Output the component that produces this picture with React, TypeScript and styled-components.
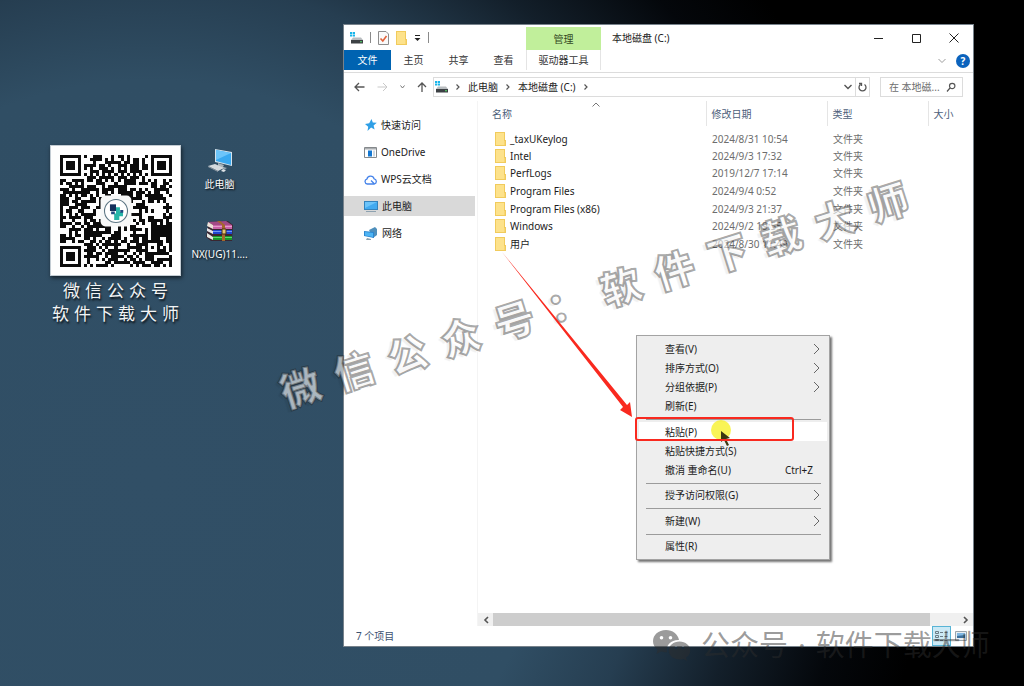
import React from "react";
import styled, { createGlobalStyle } from "styled-components";

const GlobalStyle = createGlobalStyle`
  * { box-sizing: border-box; }
  body {
    margin: 0;
    font-family: "Noto Sans", "Noto Sans CJK SC", sans-serif;
    font-size: 10px;
    line-height: 16px;
    color: #1c1c1c;
  }
  button, input {
    font: inherit;
    color: inherit;
    border: 0;
    padding: 0;
    margin: 0;
    background: none;
  }
  a { color: inherit; text-decoration: none; }
  svg { display: block; flex: none; }
`;

/* ---------- desktop ---------- */

const Desktop = styled.main`
  position: relative;
  min-height: 100vh;
  overflow: hidden;
  background: radial-gradient(
      circle at 150px 480px,
      #314f66 0px,
      #304e64 400px,
      #263e51 500px,
      #131f2a 600px,
      #04070b 700px,
      #000 780px
    );
`;

const DesktopItems = styled.div`
  display: flex;
  align-items: flex-start;
  gap: 8px;
  padding: 145px 0 0 50px;
`;

const QrCard = styled.figure`
  width: 131px;
  margin: 0;
`;

const QrPaper = styled.div`
  display: grid;
  place-items: center;
  height: 131px;
  background: #fefefe;
  border: 1px solid #c3ccd3;
  box-shadow: 1px 2px 4px rgba(0, 0, 0, 0.6);
`;

const QrCaption = styled.figcaption`
  padding: 3px 0 0 5px;
  margin: 0 -4px;
  font-size: 17px;
  line-height: 23px;
  letter-spacing: 5px;
  text-align: center;
  white-space: nowrap;
  color: #f2f4f5;
  text-shadow: 1px 2px 2px rgba(0, 0, 0, 0.8);
`;

const IconColumn = styled.nav`
  display: flex;
  flex-direction: column;
  gap: 24px;
  width: 61px;
  padding-top: 3px;
`;

const DesktopIcon = styled.a`
  display: flex;
  flex-direction: column;
  align-items: center;
  gap: 3px;
  height: 46px;
  color: #fff;
  white-space: nowrap;
  text-shadow: 1px 1px 2px #000;
`;

/* ---------- explorer window ---------- */

const Window = styled.section`
  position: absolute;
  top: 24px;
  right: 50px;
  bottom: 39px;
  left: 343px;
  display: flex;
  flex-direction: column;
  background: #fff;
  border: 1px solid #77828b;
`;

const TitleBar = styled.header`
  display: flex;
  height: 25px;
`;

const QuickTools = styled.div`
  display: flex;
  align-items: center;
  gap: 7px;
  width: 182px;
  padding-left: 6px;
`;

const ToolRule = styled.span`
  width: 1px;
  height: 11px;
  background: #8a8a8a;
`;

const ContextTitle = styled.div`
  width: 75px;
  margin-top: 2px;
  line-height: 24px;
  text-align: center;
  color: #33481f;
  background: #c1ef9b;
`;

const WindowTitle = styled.h1`
  flex: 1;
  margin: 0;
  padding-left: 11px;
  font-size: 10px;
  font-weight: 400;
  line-height: 26px;
`;

const WindowButton = styled.button`
  display: grid;
  place-items: center;
  width: 38px;
`;

const Ribbon = styled.div`
  display: flex;
  height: 23px;
  border-bottom: 1px solid #dcdcdc;
`;

const RibbonTab = styled.button<{ $kind?: "file" | "tools" }>`
  width: ${(p) => (p.$kind === "file" ? 47 : p.$kind === "tools" ? 75 : 45)}px;
  height: 20px;
  line-height: 20px;
  color: ${(p) => (p.$kind === "file" ? "#fff" : "#333")};
  background: ${(p) => (p.$kind === "file" ? "#0063b1" : "none")};
  border: solid #e4e4e4;
  border-width: ${(p) => (p.$kind === "tools" ? "0 1px" : "0")};
`;

const RibbonTail = styled.div`
  flex: 1;
  display: flex;
  justify-content: flex-end;
  align-items: center;
  gap: 10px;
  padding-right: 3px;
`;

const HelpButton = styled.button`
  width: 14px;
  height: 14px;
  border-radius: 50%;
  line-height: 14px;
  font-weight: 700;
  color: #fff;
  background: #0b63bd;
`;

const NavRow = styled.div`
  display: flex;
  align-items: center;
  height: 28px;
  padding-right: 10px;
`;

const NavButtons = styled.div`
  display: flex;
  align-items: center;
  justify-content: space-between;
  width: 89px;
  padding: 0 6px 0 10px;
`;

const AddressBar = styled.div`
  flex: 1;
  display: flex;
  align-items: center;
  height: 20px;
  border: 1px solid #dcdcdc;
`;

const Crumbs = styled.div`
  flex: 1;
  display: flex;
  align-items: center;
  gap: 8px;
  padding-left: 1px;
  white-space: nowrap;
`;

const AddressButton = styled.button<{ $divided?: boolean }>`
  display: grid;
  place-items: center;
  width: 14px;
  height: 18px;
  border-left: ${(p) => (p.$divided ? "1px solid #dcdcdc" : "0")};
`;

const SearchBox = styled.label`
  display: flex;
  align-items: center;
  width: 83px;
  height: 20px;
  margin-left: 10px;
  padding: 0 6px 0 8px;
  border: 1px solid #dcdcdc;
`;

const SearchInput = styled.input`
  flex: 1;
  min-width: 0;
  height: 18px;
  outline: 0;
  &::placeholder { color: #6d6d6d; opacity: 1; }
`;

const Body = styled.div`
  flex: 1;
  display: flex;
  min-height: 0;
`;

const Sidebar = styled.nav`
  display: flex;
  flex-direction: column;
  gap: 7px;
  width: 134px;
  padding: 14px 2px 0 0;
  border-right: 1px solid #f4f4f4;
`;

const SideLink = styled.a<{ $active?: boolean }>`
  display: flex;
  align-items: center;
  gap: 4px;
  height: 20px;
  padding-left: 20px;
  background: ${(p) => (p.$active ? "#d9d9d9" : "none")};
`;

const FilePane = styled.div`
  flex: 1;
  display: flex;
  flex-direction: column;
  justify-content: space-between;
  min-width: 0;
`;

const FileTable = styled.table`
  width: 100%;
  table-layout: fixed;
  border-collapse: collapse;
  white-space: nowrap;
`;

const HeadCell = styled.th<{ $width?: number; $first?: boolean }>`
  position: relative;
  width: ${(p) => (p.$width ? p.$width + "px" : "auto")};
  height: 25px;
  padding: 0 0 0 ${(p) => (p.$first ? 14 : 5)}px;
  text-align: left;
  font-weight: 400;
  color: #4c607a;
  border-left: ${(p) => (p.$first ? "0" : "1px solid #e5e5e5")};
`;

const SortMark = styled.span`
  position: absolute;
  top: 1px;
  left: 50%;
`;

const FileRow = styled.tr`
  height: 18px;
  &:first-child { height: 21px; }
  &:first-child td { padding-top: 4px; }
  &:nth-child(3n + 2) { height: 17px; }
`;

const FileCell = styled.td`
  padding: 0 0 0 6px;
  line-height: 16px;
  color: #6d6d6d;
`;

const FileName = styled.a`
  display: flex;
  align-items: center;
  gap: 4px;
  padding-left: 11px;
  color: #1c1c1c;
`;

const ScrollBar = styled.div`
  display: flex;
  height: 13px;
  background: #f0f0f0;
`;

const ScrollButton = styled.button`
  display: grid;
  place-items: center;
  width: 15px;
`;

const ScrollTrack = styled.div`
  flex: 1;
  padding-right: 28px;
`;

const ScrollThumb = styled.div`
  height: 13px;
  background: #cdcdcd;
`;

const StatusBar = styled.footer`
  display: flex;
  justify-content: space-between;
  align-items: center;
  height: 20px;
  padding: 0 3px 0 12px;
  color: #3c5170;
`;

const ViewButtons = styled.div`
  display: flex;
`;

const ViewButton = styled.button<{ $on?: boolean }>`
  display: grid;
  place-items: center;
  width: 19px;
  height: 20px;
  border: 1px solid ${(p) => (p.$on ? "#58b4d6" : "transparent")};
  background: ${(p) => (p.$on ? "#cbe9f5" : "none")};
`;

/* ---------- context menu ---------- */

const Menu = styled.div`
  position: absolute;
  top: 335px;
  left: 636px;
  display: flex;
  flex-direction: column;
  justify-content: space-between;
  width: 194px;
  height: 225px;
  padding: 3px 2px;
  background: #eeeeee;
  border: 1px solid #a3a3a3;
  box-shadow: 2px 2px 2px rgba(0, 0, 0, 0.55);
`;

const MenuItem = styled.button<{ $hot?: boolean }>`
  display: flex;
  justify-content: space-between;
  align-items: center;
  height: 19px;
  padding: 0 6px 0 26px;
  white-space: nowrap;
  background: ${(p) => (p.$hot ? "#fff" : "none")};
`;

const Shortcut = styled.span`
  padding-right: 8px;
`;

const MenuRule = styled.hr`
  width: 175px;
  height: 1px;
  margin: 3px 0 2px 7px;
  border: 0;
  background: #9b9b9b;
`;

/* ---------- annotations over the desktop ---------- */

const Annotation = styled.svg`
  position: absolute;
  top: 0;
  left: 0;
  pointer-events: none;
`;

const OutlineMark = styled.div`
  position: absolute;
  top: 293px;
  left: 602px;
  transform: translate(-50%, -50%) rotate(-17.5deg);
  font-size: 40px;
  font-weight: 900;
  line-height: 48px;
  letter-spacing: 16px;
  white-space: nowrap;
  color: rgba(255, 255, 255, 0.6);
  -webkit-text-stroke: 2px rgba(30, 30, 30, 0.4);
  text-shadow: -4px 1px 1px rgba(0, 0, 0, 0.06);
  pointer-events: none;
`;

const AccountMark = styled.div`
  position: absolute;
  top: 625px;
  left: 652px;
  display: flex;
  align-items: center;
  gap: 10px;
  font-size: 29px;
  line-height: 40px;
  white-space: nowrap;
  color: rgba(45, 45, 45, 0.48);
  pointer-events: none;
`;

/* ---------- drawings ---------- */

const QR_SIZE = 37;

function qrPath(): string {
  const finders = [[0, 0], [30, 0], [0, 30]];
  let seed = 20240;
  let d = "";
  for (let y = 0; y < QR_SIZE; y++) {
    for (let x = 0; x < QR_SIZE; x++) {
      seed = (seed * 16807) % 2147483647;
      let dark = seed / 2147483647 > 0.45;
      if (y === 6 || x === 6) dark = (x + y) % 2 === 0;
      const ax = Math.max(Math.abs(x - 30), Math.abs(y - 30));
      if (ax <= 2) dark = ax !== 1;
      for (const [fx, fy] of finders) {
        const r = Math.max(Math.abs(x - fx - 3), Math.abs(y - fy - 3));
        if (r <= 4) dark = r === 3 || r <= 1;
      }
      if (dark) d += `M${x} ${y}h1v1h-1z`;
    }
  }
  return d;
}

const QrCode = () => (
  <svg width="112" height="112" viewBox="0 0 37 37" role="img" aria-label="二维码">
    <path d={qrPath()} fill="#0c0c0c" shapeRendering="crispEdges" />
    <rect x="13.4" y="13.4" width="10.2" height="10.2" rx="1.6" fill="#f7f8f8" />
    <circle cx="18.5" cy="18.5" r="3.8" fill="#fff" stroke="#5d7684" strokeWidth=".35" />
    <path d="M16.5 16.3h2v2.2h-2z" fill="#14305c" />
    <path d="M18.5 17.3h1.3v1.5h1v1.4h-1.2v1.3h-1.7v-2.2h.6z" fill="#26b5a8" />
    <path d="M16.9 18.7h1.2v.9h-1.2zM19.9 18.2h1v.9h-1z" fill="#1f4a80" />
  </svg>
);

const PcIcon = () => (
  <svg width="26" height="25" viewBox="0 0 26 25">
    <path d="M8 1l17 3v14L8 14z" fill="#d5e4ee" />
    <path d="M9 2l15 3v12L9 13z" fill="#39a9f0" />
    <path d="M9 2l15 3L9 12z" fill="#6cc5fa" />
    <path d="M11 15l6 2-1 2 4 1-2 1-7-2z" fill="#a9b4bb" />
    <path d="M1 18l7-2 9 4-6 3z" fill="#d4dade" />
    <path d="M1 18l10 5v1L1 19z" fill="#8e9aa2" />
    <path d="M16 21l3 1-2 2-3-1z" fill="#dfe4e7" />
  </svg>
);

const RarIcon = () => (
  <svg width="27" height="25" viewBox="0 0 27 25">
    <path d="M3 4l19-1 5 4-1 16H5L0 19z" fill="#3a2631" />
    <path d="M2 4l18-1 6 4H7z" fill="#a34a86" />
    <path d="M7 7h19v4H7z" fill="#c963a8" />
    <path d="M2 4l5 3v4L1 8z" fill="#eee2d8" />
    <path d="M7 8.500h19" stroke="#e59ccd" />
    <path d="M7 12h19v4H7z" fill="#1f45d0" />
    <path d="M7 13.500h19" stroke="#6f97f4" />
    <path d="M1 10l6 3v3l-6-3z" fill="#e4e4e8" />
    <path d="M7 18h19v4H7z" fill="#17962a" />
    <path d="M7 19.500h19" stroke="#5fd86c" />
    <path d="M1 15l6 4v3l-6-3z" fill="#e4e8e2" />
    <path d="M11 3h3l5 4v16h-3V7z" fill="#a5682b" />
    <path d="M16 11h4v5h-4z" fill="#e7c873" stroke="#4a3212" />
  </svg>
);

const DriveIcon = () => (
  <svg width="13" height="12" viewBox="0 0 13 12">
    <path d="M0 0h2.200v2H0zM2.800 0H5v2H2.800zM0 2.600h2.200v2H0zM2.800 2.600H5v2H2.800z" fill="#19b5ea" />
    <path d="M3 5.500h8l2 2.500H1z" fill="#b9bdc0" />
    <path d="M1 8h12v3.500H1z" fill="#3c4144" />
    <path d="M10 9.200h2v1h-2z" fill="#56e06a" />
  </svg>
);

const CheckDocIcon = () => (
  <svg width="11" height="14" viewBox="0 0 11 14">
    <path d="M.5.500h7.500l2.500 2.500v10.500H.5z" fill="#fafafa" stroke="#8d8d8d" />
    <path d="M2.500 7.500l2.300 2.500L8.500 5" fill="none" stroke="#e2633b" strokeWidth="1.600" />
  </svg>
);

const FolderIcon = () => (
  <svg width="11" height="14" viewBox="0 0 11 14">
    <path d="M0 0h10v8h1v6H0z" fill="#f1cb5c" />
    <path d="M1 1h8v12H1z" fill="#fde28b" />
    <path d="M9 9h1v4H9z" fill="#f8d673" />
  </svg>
);

const CaretIcon = () => (
  <svg width="7" height="8" viewBox="0 0 7 8">
    <path d="M1 1.500h5" stroke="#222" />
    <path d="M.5 4h6L3.500 7z" fill="#222" />
  </svg>
);

type StrokeProps = { d: string; w?: number; h?: number; color?: string; weight?: number };
const Stroke = ({ d, w = 10, h = 10, color = "#555", weight = 1 }: StrokeProps) => (
  <svg width={w} height={h} viewBox={`0 0 ${w} ${h}`} fill="none" stroke={color} strokeWidth={weight}>
    <path d={d} />
  </svg>
);

const CrumbArrow = () => <Stroke w={4} h={6} d="M.5.500L3 3 .5 5.500" weight={1.2} />;

const StarIcon = () => (
  <svg width="13" height="12" viewBox="0 0 13 12">
    <path d="M7.500 0l1.300 3.600 4 .2-3.200 2.600 1 4.200-3.500-2.200L3.500 12l.7-4.300L1 5l4.200-.8z" fill="#2f9fe6" />
  </svg>
);

const OneDriveIcon = () => (
  <svg width="13" height="11" viewBox="0 0 13 11">
    <path d="M.5.500h12v10H.5z" fill="#fff" stroke="#85898c" />
    <path d="M1 1h11v1.500H1z" fill="#a9adb0" />
    <path d="M4 3.500h4v6H4z" fill="#1377d1" />
    <path d="M9 3.500h2v6H9z" fill="#cfd9e2" />
  </svg>
);

const CloudIcon = () => (
  <svg width="13" height="11" viewBox="0 0 13 11" fill="none" stroke="#4583ea" strokeWidth="1.300">
    <path d="M10.500 10H3.300a2.500 2.500 0 0 1-.4-4.900 3.700 3.700 0 0 1 7.200-.3 2.700 2.700 0 0 1 .4 5.200L7 6.500" />
  </svg>
);

const MonitorIcon = () => (
  <svg width="14" height="13" viewBox="0 0 14 13">
    <path d="M0 1h14v9H0z" fill="#3483bd" />
    <path d="M1 2h12v7H1z" fill="#42aaf0" />
    <path d="M1 2h12L1 8z" fill="#6cc4fa" />
    <path d="M2 11.500h10" stroke="#8ea2b0" />
  </svg>
);

const NetworkIcon = () => (
  <svg width="14" height="13" viewBox="0 0 14 13">
    <path d="M5 3l6-3 2 2v6l-4 3z" fill="#4f8fbb" />
    <path d="M0 4l10 1v6L0 9z" fill="#2b86cf" />
    <path d="M1 5l8 1v4L1 8.500z" fill="#4db4f4" />
    <path d="M3 11l4 1v1H2z" fill="#8aa0ae" />
  </svg>
);

const DetailsIcon = () => (
  <svg width="13" height="12" viewBox="0 0 13 12" fill="none" stroke="#6c7c86">
    <path d="M.5 1.500h3v2h-3zM.5 5.500h3v2h-3zM.5 9.500h3v1h-3zM5 2.500h3M5 6.500h3M5 10.500h3M9.500 2.500h3M9.500 6.500h3M9.500 10.500h3" />
  </svg>
);

const ThumbsIcon = () => (
  <svg width="12" height="10" viewBox="0 0 12 10">
    <path d="M.5.500h11v9H.5z" fill="#e9eef2" stroke="#9aa4ab" />
    <path d="M2 2h8v3H2z" fill="#7fb7e2" />
    <path d="M2 5l8-1v3H2z" fill="#3c6f9b" />
  </svg>
);

const WeChatIcon = () => (
  <svg width="39" height="32" viewBox="0 0 39 32" fill="currentColor">
    <path
      fillRule="evenodd"
      d="M14 1C6.300 1 1 6 1 12.200c0 3.500 1.800 6.400 4.600 8.400L4.500 25l4.600-2.400c1.800.5 3.400.8 5.900.7-1.700-7.300 4.600-12.700 12-12.300C26 5 20.500 1 14 1zM9.500 7a1.800 1.800 0 1 1 0 3.600 1.800 1.800 0 0 1 0-3.600zm9 0a1.800 1.800 0 1 1 0 3.600 1.800 1.800 0 0 1 0-3.600z"
    />
    <path
      fillRule="evenodd"
      d="M27.500 12.500c-6 0-10.800 4-10.800 9s4.800 9 10.800 9c1.400 0 2.700-.2 3.900-.6L35 32l-1-3.400c2.600-1.600 4.300-4.200 4.300-7.100 0-5-4.800-9-10.800-9zM24 17a1.500 1.500 0 1 1 0 3 1.500 1.500 0 0 1 0-3zm7 0a1.500 1.500 0 1 1 0 3 1.500 1.500 0 0 1 0-3z"
    />
  </svg>
);

/* ---------- data ---------- */

const files = [
  ["_taxUKeylog", "2024/8/31 10:54"],
  ["Intel", "2024/9/3 17:32"],
  ["PerfLogs", "2019/12/7 17:14"],
  ["Program Files", "2024/9/4 0:52"],
  ["Program Files (x86)", "2024/9/3 21:37"],
  ["Windows", "2024/9/2 19:55"],
  ["用户", "2024/8/30 11:49"],
];

const places = [
  { name: "快速访问", icon: <StarIcon /> },
  { name: "OneDrive", icon: <OneDriveIcon /> },
  { name: "WPS云文档", icon: <CloudIcon /> },
  { name: "此电脑", icon: <MonitorIcon />, active: true },
  { name: "网络", icon: <NetworkIcon /> },
];

type Entry = { label: string; more?: boolean; keys?: string; hot?: boolean } | null;

const menu: Entry[] = [
  { label: "查看(V)", more: true },
  { label: "排序方式(O)", more: true },
  { label: "分组依据(P)", more: true },
  { label: "刷新(E)" },
  null,
  { label: "粘贴(P)", hot: true },
  { label: "粘贴快捷方式(S)" },
  { label: "撤消 重命名(U)", keys: "Ctrl+Z" },
  null,
  { label: "授予访问权限(G)", more: true },
  null,
  { label: "新建(W)", more: true },
  null,
  { label: "属性(R)" },
];

/* ---------- page ---------- */

const Explorer = () => (
  <Window>
    <TitleBar>
      <QuickTools>
        <DriveIcon />
        <ToolRule />
        <CheckDocIcon />
        <FolderIcon />
        <CaretIcon />
        <ToolRule />
      </QuickTools>
      <ContextTitle>管理</ContextTitle>
      <WindowTitle>本地磁盘 (C:)</WindowTitle>
      <WindowButton aria-label="最小化"><Stroke d="M1 5.500h9" color="#222" /></WindowButton>
      <WindowButton aria-label="最大化"><Stroke d="M1.500 1.500h8v8h-8z" color="#222" /></WindowButton>
      <WindowButton aria-label="关闭"><Stroke d="M.5.500l9 9M9.500.500l-9 9" color="#222" /></WindowButton>
    </TitleBar>
    <Ribbon>
      <RibbonTab $kind="file">文件</RibbonTab>
      <RibbonTab>主页</RibbonTab>
      <RibbonTab>共享</RibbonTab>
      <RibbonTab>查看</RibbonTab>
      <RibbonTab $kind="tools">驱动器工具</RibbonTab>
      <RibbonTail>
        <Stroke w={8} h={6} d="M.5 1L4 4.500 7.500 1" color="#9b9b9b" />
        <HelpButton aria-label="帮助">?</HelpButton>
      </RibbonTail>
    </Ribbon>
    <NavRow>
      <NavButtons>
        <button aria-label="后退"><Stroke w={11} d="M10.500 5H1M5 1L1 5l4 4" weight={1.3} /></button>
        <button aria-label="前进"><Stroke w={11} d="M.5 5H10M6 1l4 4-4 4" color="#c9c9c9" /></button>
        <button aria-label="最近位置"><Stroke w={5} h={4} d="M.5.500l2 2.500 2-2.500" color="#777" /></button>
        <button aria-label="上移"><Stroke d="M5 10V1M1 5l4-4 4 4" weight={1.3} /></button>
      </NavButtons>
      <AddressBar>
        <Crumbs>
          <DriveIcon />
          <CrumbArrow />
          <button>此电脑</button>
          <CrumbArrow />
          <button>本地磁盘 (C:)</button>
          <CrumbArrow />
        </Crumbs>
        <AddressButton aria-label="展开"><Stroke w={8} h={6} d="M.5 1L4 4.500 7.500 1" weight={1.4} /></AddressButton>
        <AddressButton $divided aria-label="刷新">
          <Stroke w={9} h={10} d="M2.500 2.500a3.500 3.500 0 1 0 4 0M1 1.500h2.500V4" weight={1.3} />
        </AddressButton>
      </AddressBar>
      <SearchBox>
        <SearchInput aria-label="搜索" placeholder="在 本地磁..." />
        <Stroke d="M1 9.500l3-3.500M3.500 4a2.700 2.700 0 1 0 5.400 0a2.700 2.700 0 1 0-5.400 0" weight={1.2} />
      </SearchBox>
    </NavRow>
    <Body>
      <Sidebar>
        {places.map((p) => (
          <SideLink key={p.name} href="#" $active={p.active}>
            {p.icon}
            {p.name}
          </SideLink>
        ))}
      </Sidebar>
      <FilePane>
        <FileTable>
          <thead>
            <tr>
              <HeadCell $first>
                名称
                <SortMark><Stroke w={8} h={5} d="M.5 4.500L4 1l3.500 3.500" color="#777" /></SortMark>
              </HeadCell>
              <HeadCell $width={121}>修改日期</HeadCell>
              <HeadCell $width={101}>类型</HeadCell>
              <HeadCell $width={45}>大小</HeadCell>
            </tr>
          </thead>
          <tbody>
            {files.map(([name, date]) => (
              <FileRow key={name}>
                <FileCell>
                  <FileName href="#">
                    <FolderIcon />
                    {name}
                  </FileName>
                </FileCell>
                <FileCell>{date}</FileCell>
                <FileCell>文件夹</FileCell>
                <FileCell />
              </FileRow>
            ))}
          </tbody>
        </FileTable>
        <ScrollBar>
          <ScrollButton aria-label="向左滚动"><Stroke w={6} h={8} d="M5 1L2 4l3 3" weight={1.6} /></ScrollButton>
          <ScrollTrack><ScrollThumb /></ScrollTrack>
          <ScrollButton aria-label="向右滚动"><Stroke w={6} h={8} d="M1 1l3 3-3 3" weight={1.6} /></ScrollButton>
        </ScrollBar>
      </FilePane>
    </Body>
    <StatusBar>
      <span>7 个项目</span>
      <ViewButtons>
        <ViewButton $on aria-label="详细信息"><DetailsIcon /></ViewButton>
        <ViewButton aria-label="大图标"><ThumbsIcon /></ViewButton>
      </ViewButtons>
    </StatusBar>
  </Window>
);

export default function App() {
  return (
    <Desktop>
      <GlobalStyle />
      <DesktopItems>
        <QrCard>
          <QrPaper><QrCode /></QrPaper>
          <QrCaption>
            微信公众号
            <br />
            软件下载大师
          </QrCaption>
        </QrCard>
        <IconColumn>
          <DesktopIcon href="#"><PcIcon />此电脑</DesktopIcon>
          <DesktopIcon href="#"><RarIcon />NX(UG)11....</DesktopIcon>
        </IconColumn>
      </DesktopItems>

      <Explorer />

      <OutlineMark>微信公众号：软件下载大师</OutlineMark>

      <Menu role="menu">
        {menu.map((item, i) =>
          item ? (
            <MenuItem key={i} role="menuitem" $hot={item.hot}>
              {item.label}
              {item.more && <Stroke w={8} h={12} d="M1 1l5 5-5 5" color="#666" />}
              {item.keys && <Shortcut>{item.keys}</Shortcut>}
            </MenuItem>
          ) : (
            <MenuRule key={i} />
          )
        )}
      </Menu>

      <Annotation width="1024" height="686" viewBox="0 0 1024 686">
        <path d="M502 252L627 405l3-3 2 15-12-7 3-3z" fill="#f9291f" />
        <circle cx="721" cy="430" r="10" fill="#f7f01e" fillOpacity=".75" />
        <path d="M721 431v11l3-2 3 6 2-1-3-6 4-1z" fill="#3b3812" />
        <rect x="636" y="418" width="157" height="22" rx="2" fill="none" stroke="#f9291f" strokeWidth="2" />
      </Annotation>

      <AccountMark>
        <WeChatIcon />
        <span>公众号</span>
        <span>·</span>
        <span>软件下载大师</span>
      </AccountMark>
    </Desktop>
  );
}
